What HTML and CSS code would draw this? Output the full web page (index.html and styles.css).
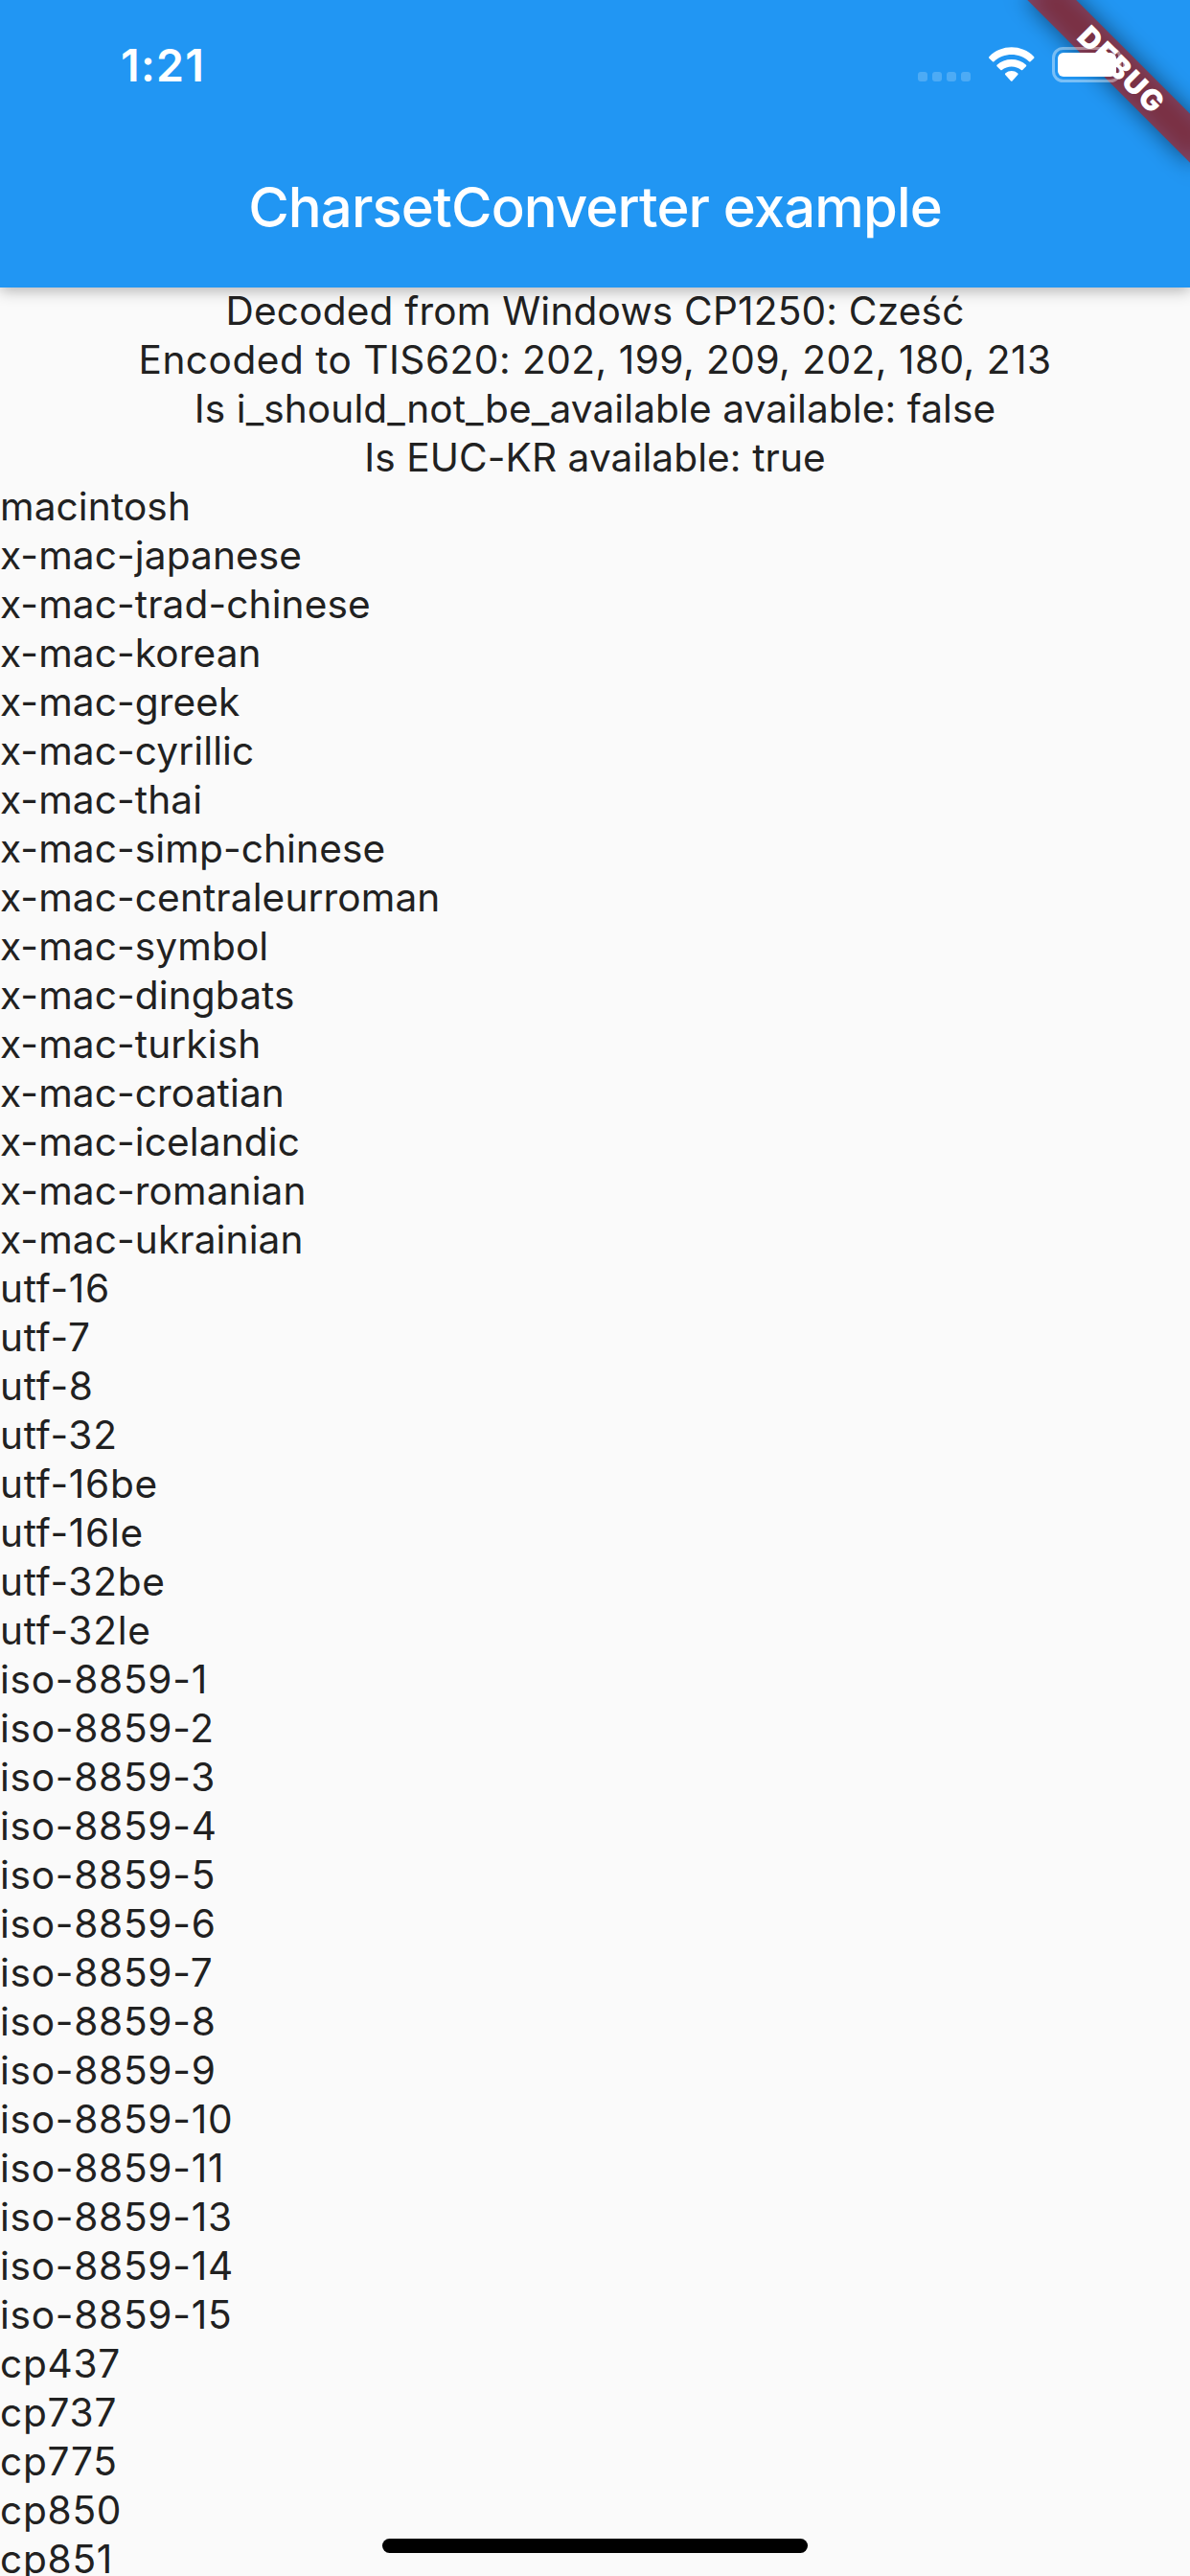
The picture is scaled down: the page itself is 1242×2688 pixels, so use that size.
FILE: index.html
```html
<!DOCTYPE html>
<html lang="en">
<head>
<meta charset="utf-8">
<title>CharsetConverter example</title>
<link rel="stylesheet" href="styles.css">
</head>
<body>
<div class="screen">
  <header class="app-bar">
    <div class="status-bar">
      <span class="clock">1:21</span>
      <svg class="status-icons" width="230" height="50" viewBox="950 42 230 50">
        <g fill="#fff" fill-opacity=".2">
          <rect x="958" y="75" width="10" height="10" rx="3"/>
          <rect x="973" y="75" width="10" height="10" rx="3"/>
          <rect x="988" y="75" width="10" height="10" rx="3"/>
          <rect x="1003" y="75" width="10" height="10" rx="3"/>
        </g>
        <path fill="#fff" d="M1032.3 59.2C1045 46 1066.500 46 1079.200 59.200Q1079.800 60 1079.200 60.700L1075.500 64.300Q1074.800 64.800 1074.100 64.300C1063.800 54.700 1047.700 54.700 1037.400 64.300Q1036.700 64.800 1036 64.300L1032.300 60.700Q1031.700 60 1032.300 59.200Z"/>
        <path fill="#fff" d="M1040.500 67.800C1048.500 60 1063 60 1071 67.800Q1071.600 68.500 1071 69.200L1067.200 73Q1066.500 73.500 1065.800 73C1060.200 68.200 1051.300 68.200 1045.700 73Q1045 73.500 1044.300 73L1040.500 69.200Q1039.900 68.500 1040.500 67.800Z"/>
        <path fill="#fff" d="M1049.200 76.500C1053 73.200 1058.500 73.200 1062.300 76.500Q1062.900 77.300 1062.300 78L1056.500 84.500Q1055.700 85.200 1055 84.500L1049.200 78Q1048.600 77.300 1049.200 76.500Z"/>
      </svg>
    </div>
    <h1 class="title">CharsetConverter example</h1>
  </header>
  <main class="content">
    <div class="results">
      <p class="decoded">Decoded from Windows CP1250: Cześć</p>
      <p class="encoded">Encoded to TIS620: 202, 199, 209, 202, 180, 213</p>
      <p>Is i_should_not_be_available available: false</p>
      <p>Is EUC-KR available: true</p>
    </div>
    <ul class="charsets charsets-mac">
      <li>macintosh</li>
      <li>x-mac-japanese</li>
      <li>x-mac-trad-chinese</li>
      <li>x-mac-korean</li>
      <li>x-mac-greek</li>
      <li>x-mac-cyrillic</li>
      <li>x-mac-thai</li>
      <li>x-mac-simp-chinese</li>
      <li>x-mac-centraleurroman</li>
      <li>x-mac-symbol</li>
      <li>x-mac-dingbats</li>
      <li>x-mac-turkish</li>
      <li>x-mac-croatian</li>
      <li>x-mac-icelandic</li>
      <li>x-mac-romanian</li>
      <li>x-mac-ukrainian</li>
    </ul>
    <ul class="charsets">
      <li>utf-16</li>
      <li>utf-7</li>
      <li>utf-8</li>
      <li>utf-32</li>
      <li>utf-16be</li>
      <li>utf-16le</li>
      <li>utf-32be</li>
      <li>utf-32le</li>
      <li>iso-8859-1</li>
      <li>iso-8859-2</li>
      <li>iso-8859-3</li>
      <li>iso-8859-4</li>
      <li>iso-8859-5</li>
      <li>iso-8859-6</li>
      <li>iso-8859-7</li>
      <li>iso-8859-8</li>
      <li>iso-8859-9</li>
      <li>iso-8859-10</li>
      <li>iso-8859-11</li>
      <li>iso-8859-13</li>
      <li>iso-8859-14</li>
      <li>iso-8859-15</li>
      <li>cp437</li>
      <li>cp737</li>
      <li>cp775</li>
      <li>cp850</li>
      <li>cp851</li>
    </ul>
  </main>
  <svg class="debug-banner" width="242" height="242" viewBox="0 0 242 242">
    <defs>
      <filter id="ribbon-shadow" x="-50%" y="-150%" width="200%" height="400%">
        <feGaussianBlur stdDeviation="12"/>
      </filter>
    </defs>
    <g transform="translate(242 0) rotate(45)">
      <rect x="-120" y="84" width="240" height="36" fill="#000" fill-opacity=".5" filter="url(#ribbon-shadow)"/>
      <rect x="-120" y="84" width="240" height="36" fill="#b71c1c" fill-opacity=".627"/>
      <text class="debug-label" x="1" y="113" text-anchor="middle">DEBUG</text>
    </g>
    <rect x="99.500" y="50.500" width="69.500" height="34" rx="10" fill="none" stroke="#fff" stroke-opacity=".4" stroke-width="3"/>
    <rect x="104" y="55" width="61" height="25" rx="6" fill="#fff"/>
    <path d="M172 62q4 1.500 4 5.500t-4 5.500z" fill="#fff" fill-opacity=".4"/>
  </svg>
  <div class="home-indicator"></div>
</div>
</body>
</html>
```
FILE: styles.css
```css
* {
  box-sizing: border-box;
  margin: 0;
  padding: 0;
}

body {
  background: #fafafa;
  font-family: Inter, "Liberation Sans", sans-serif;
}

.screen {
  position: relative;
  width: 1242px;
  height: 2688px;
  overflow: hidden;
  background: #fafafa;
}

.app-bar {
  position: relative;
  z-index: 1;
  height: 300px;
  background: #2196f3;
  color: #fff;
  box-shadow: 0 3px 15px rgba(0, 0, 0, .3);
}

.status-bar {
  display: flex;
  justify-content: space-between;
  align-items: flex-start;
  height: 132px;
  padding: 42px 62px 0 126px;
}

.clock {
  font-size: 46.5px;
  line-height: 52px;
  font-weight: 600;
  letter-spacing: 1.3px;
}

.title {
  height: 168px;
  font-size: 58px;
  line-height: 168px;
  font-weight: 500;
  letter-spacing: -.86px;
  text-align: center;
}

.content {
  margin-top: -1px;
  color: #212121;
  font-size: 40.6px;
  line-height: 51px;
  letter-spacing: .75px;
  white-space: nowrap;
}

.results {
  letter-spacing: .1px;
  text-align: center;
}

.decoded {
  letter-spacing: .2px;
}

.encoded {
  letter-spacing: .5px;
}

.charsets {
  list-style: none;
}

.charsets-mac {
  letter-spacing: .12px;
}

.debug-banner {
  position: absolute;
  top: 0;
  right: 0;
  z-index: 2;
}

.debug-label {
  fill: #fff;
  font-size: 30.6px;
  font-weight: 900;
  letter-spacing: 1.5px;
}

.home-indicator {
  position: absolute;
  left: 399px;
  bottom: 24px;
  z-index: 3;
  width: 444px;
  height: 15px;
  border-radius: 8px;
  background: #000;
}
```
